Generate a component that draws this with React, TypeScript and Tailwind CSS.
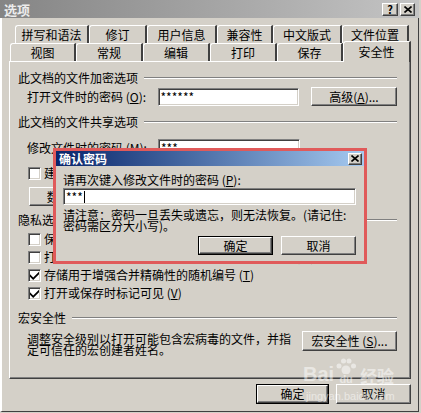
import React from "react";

const raised =
  "border border-t-white border-l-white border-r-[#404040] border-b-[#404040] shadow-[inset_-1px_-1px_0_#808080] bg-[#d4d0c8]";
const sunken =
  "bg-white border border-t-[#808080] border-l-[#808080] border-r-white border-b-white shadow-[inset_1px_1px_0_#404040,inset_-1px_-1px_0_#d4d0c8]";

function Btn({ children, w, h = 19, def = false }: { children: React.ReactNode; w: number; h?: number; def?: boolean }) {
  const inner = (
    <div className={`${raised} flex items-center justify-center w-full h-full text-[12px] leading-none`}>{children}</div>
  );
  return def ? (
    <div className="border border-black box-border" style={{ width: w, height: h }}>
      {inner}
    </div>
  ) : (
    <div style={{ width: w, height: h }}>{inner}</div>
  );
}

function Check({ checked, label }: { checked?: boolean; label: React.ReactNode }) {
  return (
    <div className="flex items-center h-[18px] ml-[10px]">
      <div className={`${sunken} w-[13px] h-[13px] flex items-center justify-center`}>
        {checked && (
          <svg width="9" height="9" viewBox="0 0 7 7">
            <path d="M0 2.5 L2.5 5 L7 0.5 L7 2.5 L2.5 7 L0 4.5 Z" fill="black" />
          </svg>
        )}
      </div>
      <span className="ml-[3px] text-[12px] leading-none">{label}</span>
    </div>
  );
}

function Heading({ text }: { text: string }) {
  return (
    <div className="flex items-center h-[14px]">
      <span className="text-[12px] leading-none">{text}</span>
      <div className="flex-1 ml-[6px] h-[2px] border-t border-t-[#808080] border-b border-b-white" />
    </div>
  );
}

const tabs1 = [
  ["拼写和语法", 74],
  ["修订", 58],
  ["用户信息", 70],
  ["兼容性", 56],
  ["中文版式", 69],
  ["文件位置", 67],
] as const;
const tabs2 = [
  ["视图", 66],
  ["常规", 67],
  ["编辑", 67],
  ["打印", 67],
  ["保存", 66],
] as const;

export default function App() {
  return (
    <div
      className="relative w-[421px] h-[413px] bg-[#d4d0c8] overflow-hidden text-black"
      style={{ fontFamily: '"Noto Sans CJK SC", "Liberation Sans", sans-serif' }}
    >
      <div className="w-[419px] h-[412px] border-r border-r-[#404040] border-b border-b-[#404040] border-l-2 border-l-white">
        {/* title bar */}
        <div className="h-[18px] -ml-[2px] w-[419px] bg-gradient-to-r from-[#858585] to-[#c4c4c4] flex items-center justify-between pl-[4px] pr-[4px]">
          <span className="text-[13px] font-bold text-[#ececec] leading-none">选项</span>
          <div className="flex gap-[2px]">
            <div className={`${raised} w-[16px] h-[13px] flex items-center justify-center text-[11px] font-bold leading-none`}>?</div>
            <div className={`${raised} w-[15px] h-[13px] flex items-center justify-center`}>
              <svg width="8" height="7" viewBox="0 0 8 7">
                <path d="M0.5 0.5 L7.5 6.5 M7.5 0.5 L0.5 6.5" stroke="black" strokeWidth="1.6" />
              </svg>
            </div>
          </div>
        </div>

        {/* tabs row 1 */}
        <div className="flex pl-[13px] mt-[7px] h-[18px]">
          {tabs1.map(([t, w]) => (
            <div
              key={t}
              style={{ width: w }}
              className="h-[18px] border-t border-l border-t-white border-l-white border-r-2 border-r-[#404040] rounded-tl-[3px] flex items-center justify-center text-[12px] leading-none"
            >
              {t}
            </div>
          ))}
        </div>
        {/* tabs row 2 */}
        <div className="flex pl-[8px] h-[18px] relative z-10">
          {tabs2.map(([t, w]) => (
            <div
              key={t}
              style={{ width: w }}
              className="h-[18px] border-t border-l border-t-white border-l-white border-r-2 border-r-[#404040] rounded-tl-[3px] flex items-center justify-center text-[12px] leading-none"
            >
              {t}
            </div>
          ))}
          <div className="w-[68px] h-[21px] -mt-[2px] bg-[#d4d0c8] border-t border-l border-t-white border-l-white border-r-2 border-r-[#404040] rounded-tl-[3px] flex items-start pt-[4px] justify-center text-[12px] leading-none">
            安全性
          </div>
        </div>

        {/* panel */}
        <div className="ml-[7px] w-[402px] h-[318px] border border-t-white border-l-white border-r-[#404040] border-b-[#404040] shadow-[inset_-1px_-1px_0_#808080] pl-[8px] pr-[13px]">
          <div className="mt-[9px]">
            <Heading text="此文档的文件加密选项" />
          </div>
          <div className="flex items-center h-[19px] mt-[2px] ml-[9px]">
            <span className="w-[131px] text-[12px] leading-none">
              打开文件时的密码 (<u>O</u>):
            </span>
            <div className={`${sunken} w-[142px] h-[18px] flex items-center pl-[2px] text-[12px] leading-none`}>******</div>
            <div className="ml-[12px]">
              <Btn w={86}>
                高级(<u>A</u>)...
              </Btn>
            </div>
          </div>
          <div className="mt-[9px]">
            <Heading text="此文档的文件共享选项" />
          </div>
          <div className="flex items-center h-[19px] mt-[9px] ml-[9px]">
            <span className="w-[131px] text-[12px] leading-none">
              修改文件时的密码 (<u>M</u>):
            </span>
            <div className={`${sunken} w-[142px] h-[18px] flex items-center pl-[2px] text-[12px] leading-none`}>***</div>
          </div>
          <div className="mt-[7px]">
            <Check label="建议以只读方式打开文档" />
          </div>
          <div className="mt-[5px] ml-[11px]">
            <Btn w={110}>数字签名(D)...</Btn>
          </div>
          <div className="mt-[7px]">
            <Heading text="隐私选项" />
          </div>
          <div className="mt-[3px]">
            <Check label="保存时从文件属性中删除个人信息(R)" />
            <Check label="打印、保存或发送包含修订的文件之前给出警告(W)" />
            <Check
              checked
              label={
                <>
                  存储用于增强合并精确性的随机编号 (<u>T</u>)
                </>
              }
            />
            <Check
              checked
              label={
                <>
                  打开或保存时标记可见 (<u>V</u>)
                </>
              }
            />
          </div>
          <div className="mt-[9px]">
            <Heading text="宏安全性" />
          </div>
          <div className="flex items-start mt-[6px] ml-[9px]">
            <div className="w-[268px] pt-[2px] text-[12px] leading-[11px]">
              调整安全级别以打开可能包含宏病毒的文件，并指定可信任的宏创建者姓名。
            </div>
            <div className="ml-[8px]">
              <Btn w={95} h={20}>
                宏安全性 (<u>S</u>)...
              </Btn>
            </div>
          </div>
        </div>

        {/* bottom buttons */}
        <div className="flex justify-end gap-[7px] pr-[7px] mt-[5px]">
          <Btn w={73} h={20} def>
            确定
          </Btn>
          <Btn w={75} h={20}>
            取消
          </Btn>
        </div>
      </div>

      {/* confirm dialog overlay */}
      <div className="absolute left-[53px] top-[148px] w-[314px] h-[116px] border-[3px] border-[#e05a5a] bg-[#d4d0c8] z-20">
        <div className="h-[15px] bg-gradient-to-r from-[#0a246a] to-[#a6caf0] flex items-center justify-between pl-[3px] pr-[2px]">
          <span className="text-[12px] font-bold text-white leading-none">确认密码</span>
          <div className={`${raised} w-[14px] h-[12px] flex items-center justify-center`}>
            <svg width="8" height="7" viewBox="0 0 8 7">
              <path d="M0.5 0.5 L7.5 6.5 M7.5 0.5 L0.5 6.5" stroke="black" strokeWidth="1.6" />
            </svg>
          </div>
        </div>
        <div className="px-[7px] pr-[8px]">
          <div className="mt-[7px] h-[14px] flex items-center text-[12px] leading-none">
            请再次键入修改文件时的密码 (<u>P</u>):
          </div>
          <div className={`${sunken} mt-[1px] h-[17px] flex items-center pl-[2px] text-[12px] leading-none`}>
            ***
            <span className="inline-block w-[1px] h-[12px] bg-black ml-[1px]" />
          </div>
          <div className="mt-[4px] text-[12px] leading-[11px]">
            请注意：密码一旦丢失或遗忘，则无法恢复。(请记住:
            <br />
            密码需区分大小写)。
          </div>
          <div className="flex justify-end gap-[8px] mt-[5px]">
            <Btn w={75} h={19} def>
              确定
            </Btn>
            <Btn w={75} h={19}>
              取消
            </Btn>
          </div>
        </div>
      </div>

      {/* watermark */}
      <div className="absolute left-[303px] top-[358px] z-30 pointer-events-none opacity-50 text-white">
        <div className="flex items-end">
          <span className="text-[20px] font-bold leading-none" style={{ fontFamily: '"Liberation Sans", sans-serif' }}>
            Bai
          </span>
          <div className="flex flex-col items-center -mb-[1px]">
            <svg width="24" height="16" viewBox="0 0 24 16">
              <circle cx="12" cy="12" r="4.5" fill="white" />
              <circle cx="5" cy="8" r="2.5" fill="white" />
              <circle cx="9.5" cy="3" r="2.5" fill="white" />
              <circle cx="15" cy="3" r="2.5" fill="white" />
              <circle cx="19.5" cy="8" r="2.5" fill="white" />
            </svg>
            <span className="text-[11px] font-bold leading-none" style={{ fontFamily: '"Liberation Sans", sans-serif' }}>
              du
            </span>
          </div>
          <span className="text-[17px] font-bold leading-none ml-[2px]">经验</span>
        </div>
        <div className="text-[11px] leading-none mt-[7px] ml-[3px]" style={{ fontFamily: '"Liberation Sans", sans-serif' }}>
          jingyan.baidu.com
        </div>
      </div>
    </div>
  );
}
